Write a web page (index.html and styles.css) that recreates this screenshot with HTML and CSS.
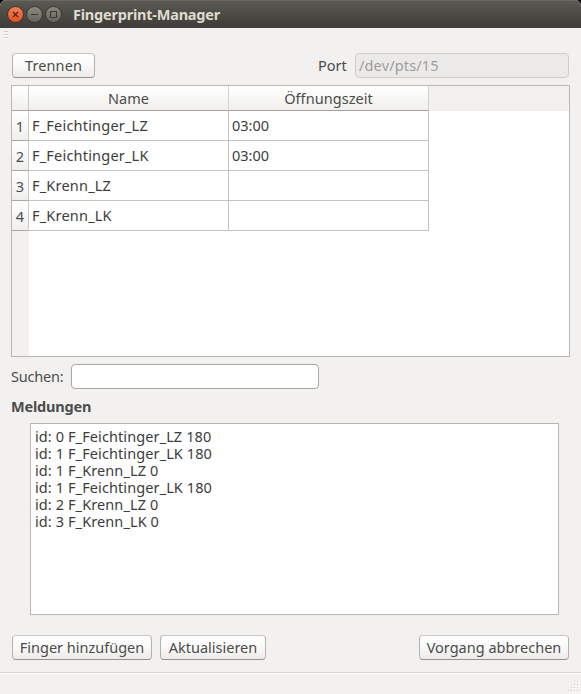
FILE: index.html
```html
<!DOCTYPE html>
<html lang="de">
<head>
<meta charset="utf-8">
<title>Fingerprint-Manager</title>
<link rel="stylesheet" href="styles.css">
</head>
<body>
<div class="window">
  <header class="titlebar">
    <svg class="controls" width="60" height="20" viewBox="0 0 60 20">
      <defs>
        <linearGradient id="red" x1="0" y1="0" x2="0" y2="1"><stop offset="0" stop-color="#f4805a"/><stop offset="1" stop-color="#e5501f"/></linearGradient>
        <linearGradient id="gray" x1="0" y1="0" x2="0" y2="1"><stop offset="0" stop-color="#8c8a80"/><stop offset="1" stop-color="#64625a"/></linearGradient>
      </defs>
      <g stroke="#35342f">
        <circle cx="10.5" cy="9.5" r="8" fill="url(#red)"/>
        <circle cx="29.5" cy="9.5" r="8" fill="url(#gray)"/>
        <circle cx="48.5" cy="9.5" r="8" fill="url(#gray)"/>
      </g>
      <g stroke="#3c3a35" fill="none" stroke-width="1.1">
        <path d="M8 7l5 5M13 7l-5 5" stroke="#4b2418"/>
        <path d="M26 9.5h7"/>
        <path d="M45.5 6.5h6v6h-6z"/>
      </g>
    </svg>
    <h1 class="title">Fingerprint-Manager</h1>
  </header>
  <div class="toolbar"><i></i><i></i><i></i></div>
  <main class="content">
    <div class="connection">
      <button class="button disconnect">Trennen</button>
      <label class="port-label" for="port">Port</label>
      <input class="field port" id="port" value="/dev/pts/15" disabled>
    </div>
    <div class="table">
      <div class="row head"><div class="num"></div><div class="cell name">Name</div><div class="cell time">Öffnungszeit</div></div>
      <div class="row"><div class="num">1</div><div class="cell">F_Feichtinger_LZ</div><div class="cell hours">03:00</div></div>
      <div class="row"><div class="num">2</div><div class="cell">F_Feichtinger_LK</div><div class="cell hours">03:00</div></div>
      <div class="row"><div class="num">3</div><div class="cell">F_Krenn_LZ</div><div class="cell"></div></div>
      <div class="row"><div class="num">4</div><div class="cell">F_Krenn_LK</div><div class="cell"></div></div>
      <div class="gutter"></div>
    </div>
    <div class="search">
      <label class="search-label" for="search">Suchen:</label>
      <input class="field query" id="search">
    </div>
    <h2 class="heading">Meldungen</h2>
    <div class="log">
      <div>id: 0 F_Feichtinger_LZ 180</div>
      <div>id: 1 F_Feichtinger_LK 180</div>
      <div>id: 1 F_Krenn_LZ 0</div>
      <div>id: 1 F_Feichtinger_LK 180</div>
      <div>id: 2 F_Krenn_LZ 0</div>
      <div>id: 3 F_Krenn_LK 0</div>
    </div>
    <div class="actions">
      <button class="button add">Finger hinzufügen</button>
      <button class="button refresh">Aktualisieren</button>
      <button class="button cancel">Vorgang abbrechen</button>
    </div>
  </main>
  <footer class="statusbar">
    <svg width="12" height="12" viewBox="0 0 12 12" fill="#d3d1cd">
      <path d="M9 0h1v1h-1zM6 3h1v1h-1zM9 3h1v1h-1zM3 6h1v1h-1zM6 6h1v1h-1zM9 6h1v1h-1zM0 9h1v1h-1zM3 9h1v1h-1zM6 9h1v1h-1zM9 9h1v1h-1z"/>
      <path fill="#fff" d="M10 1h1v1h-1zM7 4h1v1h-1zM10 4h1v1h-1zM4 7h1v1h-1zM7 7h1v1h-1zM10 7h1v1h-1zM1 10h1v1h-1zM4 10h1v1h-1zM7 10h1v1h-1zM10 10h1v1h-1z"/>
    </svg>
  </footer>
</div>
</body>
</html>
```
FILE: styles.css
```css
* { box-sizing: border-box; }
body {
  margin: 0;
  background: #000;
  color: #4c4c4c;
  font: 14.5px/18px "Noto Sans", "Open Sans", sans-serif;
}
.window {
  width: 581px;
  height: 694px;
  display: flex;
  flex-direction: column;
  background: #f2f1f0;
  border-radius: 6px 6px 0 0;
  overflow: hidden;
}
.titlebar {
  height: 28px;
  flex: none;
  display: flex;
  align-items: flex-start;
  padding: 4px 0 0 5px;
  background: linear-gradient(#5b5952, #3d3c38);
  border-top: 1px solid #6a6860;
}
.controls { flex: none; }
.title {
  margin: 0 0 0 8px;
  font-size: 14.5px;
  line-height: 18px;
  font-weight: 700;
  letter-spacing: -.22px;
  color: #dfdbd2;
  white-space: nowrap;
}
.toolbar {
  height: 25px;
  flex: none;
  display: flex;
  flex-direction: column;
  gap: 2px;
  padding: 3px 0 0 4px;
}
.toolbar i {
  width: 4px;
  height: 1px;
  background: #cfcdca;
  box-shadow: 0 1px #fff;
}
.content {
  display: flex;
  flex-direction: column;
  padding: 0 11px;
}
.connection { display: flex; height: 25px; line-height: 25px; padding: 0 1px; }
.button {
  height: 25px;
  padding: 0 0 1px;
  border: 1px solid #b4b1ad;
  border-top-color: #c8c5c2;
  border-bottom-color: #96938f;
  border-radius: 4px;
  background: linear-gradient(#fff, #f9f9f8 50%, #edebea);
  font: inherit;
  line-height: 22px;
  color: #4c4c4c;
  white-space: nowrap;
}
.disconnect { width: 83px; letter-spacing: .1px; }
.port-label { margin-left: auto; width: 37px; }
.field {
  height: 25px;
  padding: 0 3px;
  border: 1px solid #a9a7a2;
  border-radius: 4px;
  background: #fff;
  font: inherit;
  color: #3c3c3c;
}
.port {
  width: 214px;
  background: #ebeae9;
  border-color: #cfcdca;
  color: #9d9c9b;
  letter-spacing: .15px;
}
.table {
  height: 272px;
  margin-top: 7px;
  display: flex;
  flex-direction: column;
  border: 1px solid #bab6b1;
  background: #fff;
}
.row {
  display: grid;
  grid-template: 100% / 17px 200px 200px;
  height: 30px;
  flex: none;
  line-height: 29px;
}
.num, .cell { border: 0 solid #c3c3c3; border-width: 0 1px 1px 0; }
.num {
  text-align: center;
  line-height: 31px;
  background: linear-gradient(#fff, #f0efed);
  border-right-color: #cbc8c4;
  border-bottom-color: #aaa7a2;
}
.cell { padding-left: 3px; color: #3c3c3c; white-space: nowrap; letter-spacing: .2px; }
.hours { letter-spacing: 0; }
.head { height: 25px; background: #f2f1f0; line-height: 24px; }
.head .cell {
  padding: 0;
  text-align: center;
  letter-spacing: .05px;
  color: #4c4c4c;
  background: linear-gradient(#fff, #f0efed);
  border-right-color: #d5d1cc;
  border-bottom-color: #a5a29e;
}
.gutter { flex: 1; width: 17px; background: #f2f1f0; }
.search { display: flex; margin-top: 7px; height: 25px; line-height: 25px; }
.search-label { width: 60px; letter-spacing: -.2px; }
.query { width: 248px; }
.heading {
  margin: 8px 0 0;
  font-size: 14.5px;
  line-height: 18px;
  font-weight: 700;
  letter-spacing: -.2px;
}
.log {
  height: 192px;
  margin: 8px 11px 0 19px;
  padding: 4px;
  border: 1px solid #bab6b1;
  background: #fff;
  color: #3c3c3c;
  line-height: 17px;
  letter-spacing: .1px;
}
.actions { display: flex; gap: 8px; margin-top: 20px; padding: 0 1px; }
.add { width: 140px; }
.refresh { width: 106px; }
.cancel { width: 150px; margin-left: auto; }
.statusbar {
  margin-top: auto;
  height: 22px;
  flex: none;
  display: flex;
  justify-content: flex-end;
  align-items: flex-end;
  padding: 0 1px 1px 0;
  border-top: 1px solid #d6d4d1;
  box-shadow: inset 0 1px #fff;
}
```
